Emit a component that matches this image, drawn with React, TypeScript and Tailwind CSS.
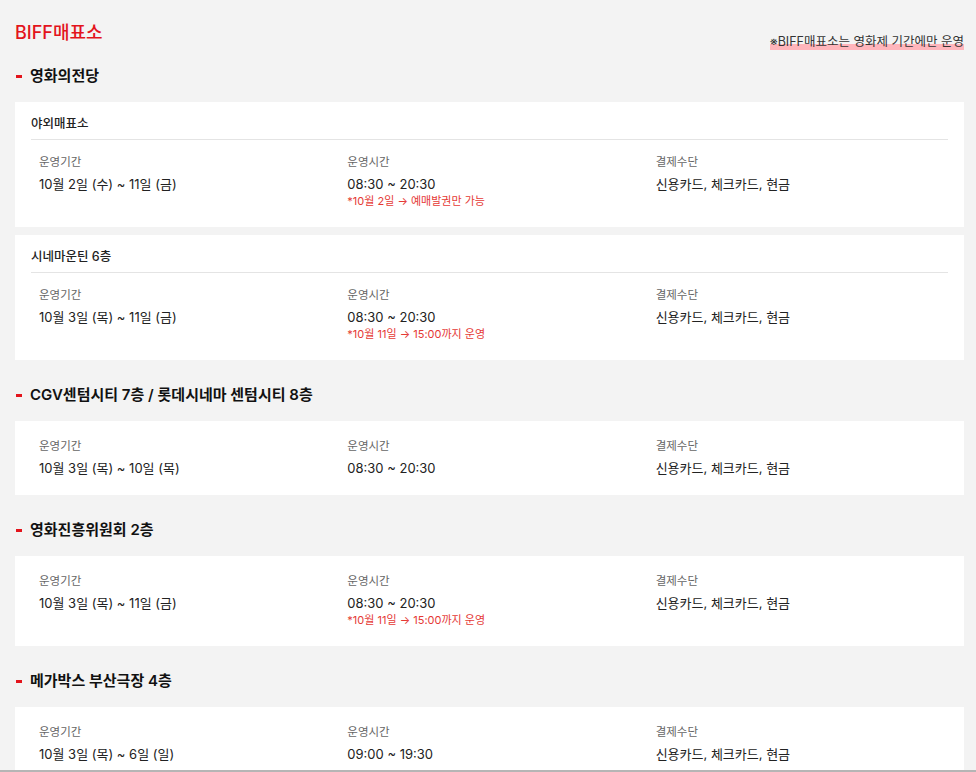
import type { FC } from "react";

type Booth = {
  name?: string;
  period: string;
  time: string;
  note?: string;
  pay: string;
};

type Section = {
  title: string;
  booths: Booth[];
};

const PAY = "신용카드, 체크카드, 현금";

const sections: Section[] = [
  {
    title: "영화의전당",
    booths: [
      {
        name: "야외매표소",
        period: "10월 2일 (수) ~ 11일 (금)",
        time: "08:30 ~ 20:30",
        note: "*10월 2일 → 예매발권만 가능",
        pay: PAY,
      },
      {
        name: "시네마운틴 6층",
        period: "10월 3일 (목) ~ 11일 (금)",
        time: "08:30 ~ 20:30",
        note: "*10월 11일 → 15:00까지 운영",
        pay: PAY,
      },
    ],
  },
  {
    title: "CGV센텀시티 7층 / 롯데시네마 센텀시티 8층",
    booths: [{ period: "10월 3일 (목) ~ 10일 (목)", time: "08:30 ~ 20:30", pay: PAY }],
  },
  {
    title: "영화진흥위원회 2층",
    booths: [
      {
        period: "10월 3일 (목) ~ 11일 (금)",
        time: "08:30 ~ 20:30",
        note: "*10월 11일 → 15:00까지 운영",
        pay: PAY,
      },
    ],
  },
  {
    title: "메가박스 부산극장 4층",
    booths: [{ period: "10월 3일 (목) ~ 6일 (일)", time: "09:00 ~ 19:30", pay: PAY }],
  },
];

const Column: FC<{ label: string; value: string; note?: string }> = ({ label, value, note }) => (
  <div className="flex flex-col">
    <span className="text-[11.5px] leading-[18px] text-[#666]">{label}</span>
    <span className="mt-1 text-[13px] leading-[18px] text-[#222]">{value}</span>
    {note && <span className="text-[11px] leading-[16px] text-[#e53935]">{note}</span>}
  </div>
);

const BoothCard: FC<{ booth: Booth }> = ({ booth }) => (
  <div className="bg-white">
    {booth.name && (
      <div className="mx-4 pt-3 pb-[5px] border-b border-[#e4e4e4] text-[12.5px] leading-[20px] font-medium text-[#222]">
        {booth.name}
      </div>
    )}
    <div className={`grid grid-cols-3 pl-6 pb-[18px] ${booth.name ? "pt-[13px]" : "pt-4"}`}>
      <Column label="운영기간" value={booth.period} />
      <Column label="운영시간" value={booth.time} note={booth.note} />
      <Column label="결제수단" value={booth.pay} />
    </div>
  </div>
);

export default function App() {
  return (
    <div
      className="h-[772px] overflow-hidden bg-[#f3f3f3] border-b-2 border-[#b5b5b5]"
      style={{ fontFamily: 'Inter, "Noto Sans CJK KR", sans-serif' }}
    >
      <div className="pl-[15px] pr-3 pt-[20px]">
        <div className="flex items-end justify-between">
          <h1 className="text-[18px] leading-[26px] font-medium text-[#e3141c]">BIFF매표소</h1>
          <span className="mb-[-4px] text-[12.5px] leading-[16px] text-[#333] bg-[linear-gradient(transparent_62%,#ffb5bb_62%)]">
            ※BIFF매표소는 영화제 기간에만 운영
          </span>
        </div>

        {sections.map((s, i) => (
          <section key={s.title}>
            <h2
              className={`${i === 0 ? "mt-[19px]" : "mt-6"} mb-[15px] flex items-center gap-2 text-[15px] leading-[22px] font-semibold text-[#111]`}
            >
              <span className="ml-px w-[6px] h-[3px] bg-[#e3141c]" />
              {s.title}
            </h2>
            <div className="flex flex-col gap-2">
              {s.booths.map((b, j) => (
                <BoothCard key={j} booth={b} />
              ))}
            </div>
          </section>
        ))}
      </div>
    </div>
  );
}
